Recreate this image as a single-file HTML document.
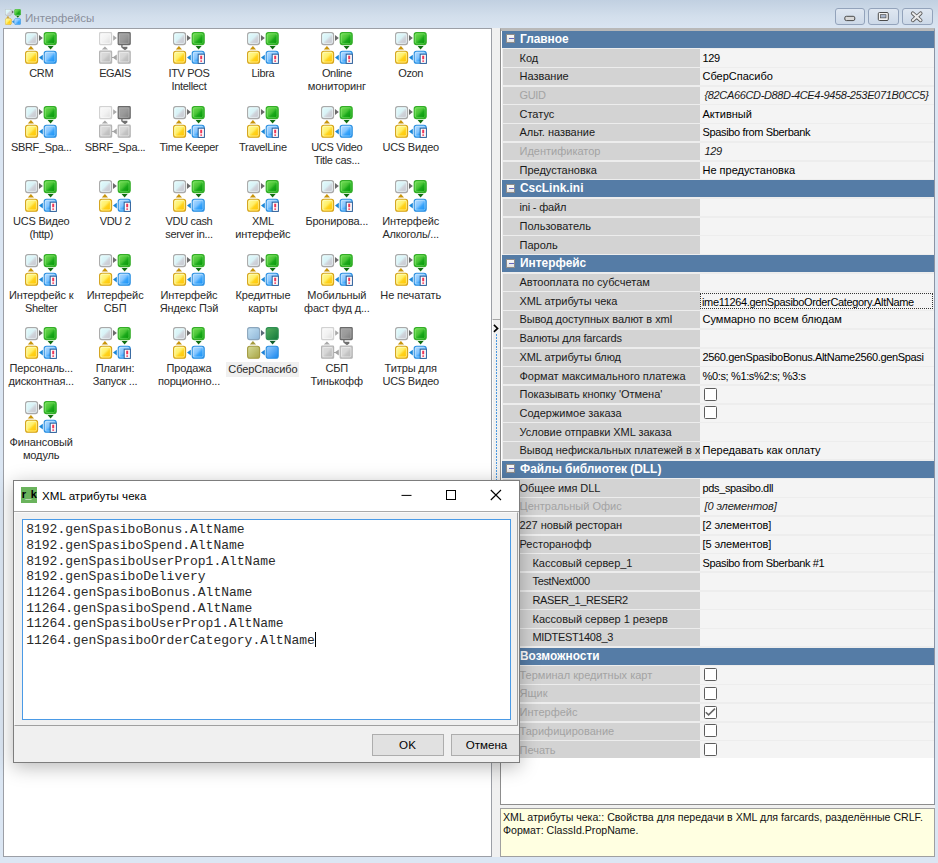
<!DOCTYPE html>
<html><head><meta charset="utf-8"><title>Интерфейсы</title>
<style>
html,body{margin:0;padding:0}
body{width:938px;height:863px;overflow:hidden;position:relative;background:#dbe6f3;font-family:"Liberation Sans",sans-serif;}
.abs{position:absolute}
#title{position:absolute;left:0;top:0;width:938px;height:28px;background:linear-gradient(#c1d0e1,#d3dfec 60%,#d9e4f1)}
#title .tx{position:absolute;left:25px;top:11px;font-size:11.6px;color:#8a8f9c;line-height:13px;letter-spacing:0}
.wb{position:absolute;top:8px;height:17px;border:1px solid #93a3bb;border-radius:3px;background:linear-gradient(#dfe7f1,#cdd9e8);box-sizing:border-box}
#list{position:absolute;left:3px;top:28px;width:489px;height:829px;box-sizing:border-box;border:1px solid #9c9fa6;background:#fff;overflow:hidden}
.it{position:absolute;width:80px;text-align:center}
.it .ic{display:block;margin:0 auto}
.lb{font-size:11px;line-height:13px;color:#2a2a2a;margin-top:3px;white-space:nowrap}
.lb.sel{display:inline-block;background:#f0f0f0;padding:1px 2px 1px 2px;margin-top:2px}
#split{position:absolute;left:492px;top:28px;width:8px;height:829px;background:#f0f0f0}
#grid{position:absolute;left:500px;top:28px;width:435px;height:777px;box-sizing:border-box;background:#fff;border-left:1px solid #8d8d8d;border-top:2px solid #b9b9b9;border-right:1px solid #8c94a4;border-bottom:1px solid #8d8d8d;overflow:hidden}
.gh{position:absolute;left:1px;width:432px;height:17.3px;background:#557ca6}
.gh span{position:absolute;left:18px;top:2.3px;font-weight:bold;font-size:11.9px;color:#fff;line-height:13px}
.mb{position:absolute;left:4px;top:3.5px;width:9px;height:9px;box-sizing:border-box;border:1px solid #8f8c8a;background:linear-gradient(#fafafa,#e4e4e4)}
.mb:after{content:"";position:absolute;left:1.5px;top:3px;width:5px;height:1px;background:#6266c0}
.gr{position:absolute;left:1.5px;width:431.5px;height:17.3px}
.nm{position:absolute;left:0;top:0;width:197.5px;height:17.3px;background:#d3d3d3;font-size:11px;line-height:13px;padding-left:17px;box-sizing:border-box;padding-top:2.4px;white-space:nowrap;overflow:hidden;color:#1a1a1a}
.nm.dis{color:#a3a3a3}
.nm.ind{padding-left:30px}
.vl{position:absolute;left:197.5px;top:0;width:234px;height:17.3px;background:#f4f4f4;overflow:hidden}
.vt,.vi{position:absolute;left:2.5px;top:2.4px;font-size:11px;line-height:13px;white-space:nowrap;color:#000}
.vi{font-style:italic;color:#1a1a1a;left:4.5px}
.cb{position:absolute;left:3.5px;top:1.9px;width:13px;height:13px;box-sizing:border-box;border:1px solid #5c5c5c;border-radius:1.5px;background:#fff}
.focus{position:absolute;left:0;top:0.5px;width:233px;height:16.5px;box-sizing:border-box;border:1px dotted #333}
.focus span{position:absolute;left:1px;top:2.3px;font-size:11px;line-height:13px;white-space:nowrap;letter-spacing:-0.35px}
#desc{position:absolute;left:500px;top:808px;width:435px;height:49px;box-sizing:border-box;border:1px solid #a0a0a0;background:#ffffe1;font-size:10.6px;line-height:12.5px;padding:2px 0 0 2px;color:#111}
#dlg{position:absolute;left:13px;top:480px;width:507px;height:283px;box-sizing:border-box;border:1px solid #7d7d7d;background:#f0f0f0;box-shadow:0 4px 18px rgba(0,0,0,0.28);overflow:hidden}
#dlg .tb{position:absolute;left:0;top:0;width:505px;height:31px;background:#fff}
#dlg .ttx{position:absolute;left:28px;top:7.6px;font-size:11.6px;line-height:13px;color:#000}
#dlg .rk{position:absolute;left:7px;top:5.5px;width:16px;height:16px;background:#6ab35c;font:bold 11px "Liberation Sans",sans-serif;color:#000;line-height:15px;text-align:center;letter-spacing:-0.6px;overflow:hidden}
#ta{position:absolute;left:8px;top:37.5px;width:489px;height:201.5px;box-sizing:border-box;border:1px solid #4a9ae6;background:#fff;font-family:"Liberation Mono",monospace;font-size:13px;line-height:15.7px;padding:2.7px 0 0 3.2px;color:#2a2a2a;white-space:nowrap}
.caret{display:inline-block;width:1px;height:15px;background:#000;vertical-align:-3px}
.btn{position:absolute;top:253px;height:22px;box-sizing:border-box;border:1px solid #adadad;background:#e1e1e1;font-size:11.6px;line-height:20px;text-align:center;color:#000}

</style></head><body>
<svg width="0" height="0" style="position:absolute">
<defs>
<linearGradient id="gW" x1="0" y1="0" x2="1" y2="1"><stop offset="0" stop-color="#e0feff"/><stop offset="0.45" stop-color="#d9f2f6"/><stop offset="0.6" stop-color="#cfd3da"/><stop offset="1" stop-color="#c4c4cc"/></linearGradient>
<linearGradient id="gG" x1="0" y1="0" x2="1" y2="1"><stop offset="0" stop-color="#7ce05a"/><stop offset="0.45" stop-color="#48c436"/><stop offset="0.6" stop-color="#1aa81a"/><stop offset="1" stop-color="#009200"/></linearGradient>
<linearGradient id="gY" x1="0" y1="0" x2="1" y2="1"><stop offset="0" stop-color="#fffda0"/><stop offset="0.45" stop-color="#ffef6a"/><stop offset="0.6" stop-color="#ffd21a"/><stop offset="1" stop-color="#ffc000"/></linearGradient>
<linearGradient id="gB" x1="0" y1="0" x2="1" y2="1"><stop offset="0" stop-color="#bfe0ff"/><stop offset="0.45" stop-color="#80c4ff"/><stop offset="0.6" stop-color="#3aa4fa"/><stop offset="1" stop-color="#0a8af5"/></linearGradient>
<linearGradient id="gX1" x1="0" y1="0" x2="1" y2="1"><stop offset="0" stop-color="#fbfbfb"/><stop offset="0.5" stop-color="#f2f2f2"/><stop offset="1" stop-color="#d8d8d8"/></linearGradient>
<linearGradient id="gX2" x1="0" y1="0" x2="1" y2="1"><stop offset="0" stop-color="#a6a6a6"/><stop offset="0.5" stop-color="#9a9a9a"/><stop offset="1" stop-color="#7a7a7a"/></linearGradient>
<linearGradient id="gX3" x1="0" y1="0" x2="1" y2="1"><stop offset="0" stop-color="#dedede"/><stop offset="0.45" stop-color="#d6d6d6"/><stop offset="0.6" stop-color="#c4c4c4"/><stop offset="1" stop-color="#b6b6b6"/></linearGradient>
<linearGradient id="gS1" x1="0" y1="0" x2="1" y2="1"><stop offset="0" stop-color="#c4e2f4"/><stop offset="1" stop-color="#8fb6d8"/></linearGradient>
<linearGradient id="gS2" x1="0" y1="0" x2="1" y2="1"><stop offset="0" stop-color="#58b060"/><stop offset="1" stop-color="#10783a"/></linearGradient>
<linearGradient id="gS3" x1="0" y1="0" x2="1" y2="1"><stop offset="0" stop-color="#d6dc9a"/><stop offset="1" stop-color="#a8a444"/></linearGradient>
<linearGradient id="gS4" x1="0" y1="0" x2="1" y2="1"><stop offset="0" stop-color="#9ccdfb"/><stop offset="1" stop-color="#1586f0"/></linearGradient>
<symbol id="base-n" viewBox="0 0 32 32">
 <rect x="0.6" y="0.6" width="12" height="12" rx="2.3" fill="url(#gW)" stroke="#a9a9a9" stroke-width="1.1"/>
 <path d="M14 3 L17.8 6 L14 9 Z" fill="#6a6a6a"/>
 <rect x="19.2" y="0.6" width="12" height="12" rx="2.3" fill="url(#gG)" stroke="#34ad27" stroke-width="1.1"/>
 <path d="M22.6 13.9 L28.6 13.9 L25.6 17.6 Z" fill="#0f6d10"/>
 <path d="M2.8 17.6 L9 17.6 L5.9 14 Z" fill="#c8940a"/>
 <rect x="0.6" y="19.2" width="12" height="12" rx="2.3" fill="url(#gY)" stroke="#d4a21a" stroke-width="1.1"/>
 <path d="M17.8 22.7 L17.8 28.5 L14 25.6 Z" fill="#1a86d8"/>
 <rect x="19.2" y="19.2" width="12" height="12" rx="2.3" fill="url(#gB)" stroke="#2a8ee0" stroke-width="1.1"/>
 <rect x="1.8" y="1.8" width="9.6" height="9.6" rx="1.3" fill="none" stroke="#f4ffff" stroke-opacity="0.7" stroke-width="0.8"/>
 <rect x="20.4" y="1.8" width="9.6" height="9.6" rx="1.3" fill="none" stroke="#8ef07a" stroke-opacity="0.6" stroke-width="0.8"/>
 <rect x="1.8" y="20.4" width="9.6" height="9.6" rx="1.3" fill="none" stroke="#ffffd0" stroke-opacity="0.7" stroke-width="0.8"/>
 <rect x="20.4" y="20.4" width="9.6" height="9.6" rx="1.3" fill="none" stroke="#d8f0ff" stroke-opacity="0.6" stroke-width="0.8"/>
</symbol>
<symbol id="ic-n" viewBox="0 0 32 32"><use href="#base-n"/></symbol>
<symbol id="ic-b" viewBox="0 0 32 32"><use href="#base-n"/>
 <rect x="25.2" y="22.2" width="6.2" height="9.2" fill="#fff" stroke="#30609a" stroke-width="1"/>
 <rect x="27.2" y="23.7" width="2" height="3.6" fill="#ee3656"/>
 <rect x="27.3" y="28.4" width="1.8" height="1.4" fill="#ee3656"/>
</symbol>
<symbol id="ic-g" viewBox="0 0 32 32">
 <rect x="0.6" y="0.6" width="12" height="12" rx="0.8" fill="url(#gX1)" stroke="#d2d2d2" stroke-width="1.2"/>
 <rect x="1.9" y="1.9" width="9.4" height="9.4" rx="1" fill="none" stroke="#fafafa" stroke-width="0.8"/>
 <path d="M14.2 3.2 L17.8 6 L14.2 8.8 Z" fill="#a8a8a8"/>
 <rect x="19.2" y="0.6" width="12" height="12" rx="0.8" fill="url(#gX2)" stroke="#6a6a6a" stroke-width="1.2"/>
 <rect x="20.5" y="1.9" width="9.4" height="9.4" rx="1" fill="none" stroke="#b4b4b4" stroke-opacity="0.7" stroke-width="0.8"/>
 <path d="M22.2 13 L22.2 15.2 L23.6 16.5 L26 18.3 L28.4 16.4 L28.4 14.8 L23.6 14.8 L23.6 13 Z" fill="#707070"/>
 <path d="M2.8 17.6 L9 17.6 L5.9 14.4 Z" fill="#a8a8a8"/>
 <rect x="0.6" y="19.2" width="12" height="12" rx="0.8" fill="url(#gX3)" stroke="#b4b4b4" stroke-width="1.2"/>
 <rect x="1.9" y="20.5" width="9.4" height="9.4" rx="1" fill="none" stroke="#f0f0f0" stroke-opacity="0.8" stroke-width="0.8"/>
 <path d="M17.8 22.6 L17.8 28.6 L14.2 26 L13 26 L13 25 L14.2 25 Z" fill="#a4a4a4"/>
 <rect x="19.2" y="19.2" width="12" height="12" rx="0.8" fill="url(#gX3)" stroke="#b4b4b4" stroke-width="1.2"/>
 <rect x="20.5" y="20.5" width="9.4" height="9.4" rx="1" fill="none" stroke="#f0f0f0" stroke-opacity="0.8" stroke-width="0.8"/>
</symbol>
<symbol id="ic-s" viewBox="0 0 32 32">
 <rect x="0.6" y="0.6" width="12" height="12" rx="2.3" fill="url(#gS1)" stroke="#8ba6bd" stroke-width="1.1"/>
 <path d="M14 3 L17.8 6 L14 9 Z" fill="#5a6a78"/>
 <rect x="19.2" y="0.6" width="12" height="12" rx="2.3" fill="url(#gS2)" stroke="#2f8f52" stroke-width="1.1"/>
 <path d="M22.6 13.9 L28.6 13.9 L25.6 17.6 Z" fill="#0e5e2c"/>
 <path d="M2.8 17.6 L9 17.6 L5.9 14 Z" fill="#a49a3c"/>
 <rect x="0.6" y="19.2" width="12" height="12" rx="2.3" fill="url(#gS3)" stroke="#a39a40" stroke-width="1.1"/>
 <path d="M17.8 22.7 L17.8 28.5 L14 25.6 Z" fill="#1a80d8"/>
 <rect x="19.2" y="19.2" width="12" height="12" rx="2.3" fill="url(#gS4)" stroke="#2a8ee0" stroke-width="1.1"/>
</symbol>
</defs>
</svg>

<div id="title">
 <svg style="position:absolute;left:5px;top:9px" width="16" height="16"><use href="#ic-n"/></svg>
 <div class="tx">Интерфейсы</div>
 <div class="wb" style="left:835px;width:30px"></div>
 <div class="wb" style="left:868px;width:31px"></div>
 <div class="wb" style="left:902px;width:31px"></div>
 <svg style="position:absolute;left:835px;top:8px" width="98" height="17">
  <rect x="9.8" y="8.3" width="10" height="4.3" rx="1.6" fill="#d8d8d8" stroke="#4a4a4a" stroke-width="1"/>
  <rect x="43.3" y="4.5" width="10" height="8" rx="1.2" fill="#f2f2f2" stroke="#4a4a4a" stroke-width="1"/>
  <rect x="45.6" y="6.7" width="5.4" height="3.2" fill="#a9b6cc" stroke="#3a3a3a" stroke-width="0.6"/>
  <path d="M77.8 5.3 L85.6 12.3 M85.6 5.3 L77.8 12.3" stroke="#5a5a5a" stroke-width="3.8" stroke-linecap="round"/>
  <path d="M77.8 5.3 L85.6 12.3 M85.6 5.3 L77.8 12.3" stroke="#ececec" stroke-width="2.1" stroke-linecap="round"/>
 </svg>
</div>
<div id="list">
<div class="it" style="left:-2.80px;top:3.20px"><svg class="ic" width="32" height="32"><use href="#ic-n"/></svg><div class="lb"><span style="letter-spacing:-0.340px">CRM</span></div></div>
<div class="it" style="left:71.10px;top:3.20px"><svg class="ic" width="32" height="32"><use href="#ic-g"/></svg><div class="lb"><span style="letter-spacing:-0.340px">EGAIS</span></div></div>
<div class="it" style="left:145.00px;top:3.20px"><svg class="ic" width="32" height="32"><use href="#ic-b"/></svg><div class="lb"><span style="letter-spacing:-0.340px">ITV POS</span><br><span style="letter-spacing:-0.340px">Intellect</span></div></div>
<div class="it" style="left:218.90px;top:3.20px"><svg class="ic" width="32" height="32"><use href="#ic-b"/></svg><div class="lb"><span style="letter-spacing:-0.340px">Libra</span></div></div>
<div class="it" style="left:292.80px;top:3.20px"><svg class="ic" width="32" height="32"><use href="#ic-b"/></svg><div class="lb"><span style="letter-spacing:-0.340px">Online</span><br><span style="letter-spacing:-0.120px">мониторинг</span></div></div>
<div class="it" style="left:366.70px;top:3.20px"><svg class="ic" width="32" height="32"><use href="#ic-b"/></svg><div class="lb"><span style="letter-spacing:-0.340px">Ozon</span></div></div>
<div class="it" style="left:-2.80px;top:77.00px"><svg class="ic" width="32" height="32"><use href="#ic-n"/></svg><div class="lb"><span style="letter-spacing:-0.340px">SBRF_Spa...</span></div></div>
<div class="it" style="left:71.10px;top:77.00px"><svg class="ic" width="32" height="32"><use href="#ic-g"/></svg><div class="lb"><span style="letter-spacing:-0.340px">SBRF_Spa...</span></div></div>
<div class="it" style="left:145.00px;top:77.00px"><svg class="ic" width="32" height="32"><use href="#ic-b"/></svg><div class="lb"><span style="letter-spacing:-0.340px">Time Keeper</span></div></div>
<div class="it" style="left:218.90px;top:77.00px"><svg class="ic" width="32" height="32"><use href="#ic-b"/></svg><div class="lb"><span style="letter-spacing:-0.340px">TravelLine</span></div></div>
<div class="it" style="left:292.80px;top:77.00px"><svg class="ic" width="32" height="32"><use href="#ic-n"/></svg><div class="lb"><span style="letter-spacing:-0.340px">UCS Video</span><br><span style="letter-spacing:-0.340px">Title cas...</span></div></div>
<div class="it" style="left:366.70px;top:77.00px"><svg class="ic" width="32" height="32"><use href="#ic-b"/></svg><div class="lb"><span style="letter-spacing:-0.203px">UCS Видео</span></div></div>
<div class="it" style="left:-2.80px;top:150.80px"><svg class="ic" width="32" height="32"><use href="#ic-b"/></svg><div class="lb"><span style="letter-spacing:-0.203px">UCS Видео</span><br><span style="letter-spacing:-0.340px">(http)</span></div></div>
<div class="it" style="left:71.10px;top:150.80px"><svg class="ic" width="32" height="32"><use href="#ic-b"/></svg><div class="lb"><span style="letter-spacing:-0.340px">VDU 2</span></div></div>
<div class="it" style="left:145.00px;top:150.80px"><svg class="ic" width="32" height="32"><use href="#ic-n"/></svg><div class="lb"><span style="letter-spacing:-0.340px">VDU cash</span><br><span style="letter-spacing:-0.340px">server in...</span></div></div>
<div class="it" style="left:218.90px;top:150.80px"><svg class="ic" width="32" height="32"><use href="#ic-b"/></svg><div class="lb"><span style="letter-spacing:-0.340px">XML</span><br><span style="letter-spacing:-0.120px">интерфейс</span></div></div>
<div class="it" style="left:292.80px;top:150.80px"><svg class="ic" width="32" height="32"><use href="#ic-b"/></svg><div class="lb"><span style="letter-spacing:-0.175px">Бронирова...</span></div></div>
<div class="it" style="left:366.70px;top:150.80px"><svg class="ic" width="32" height="32"><use href="#ic-n"/></svg><div class="lb"><span style="letter-spacing:-0.120px">Интерфейс</span><br><span style="letter-spacing:-0.193px">Алкоголь/...</span></div></div>
<div class="it" style="left:-2.80px;top:224.60px"><svg class="ic" width="32" height="32"><use href="#ic-b"/></svg><div class="lb"><span style="letter-spacing:-0.120px">Интерфейс к</span><br><span style="letter-spacing:-0.340px">Shelter</span></div></div>
<div class="it" style="left:71.10px;top:224.60px"><svg class="ic" width="32" height="32"><use href="#ic-n"/></svg><div class="lb"><span style="letter-spacing:-0.120px">Интерфейс</span><br><span style="letter-spacing:-0.120px">СБП</span></div></div>
<div class="it" style="left:145.00px;top:224.60px"><svg class="ic" width="32" height="32"><use href="#ic-n"/></svg><div class="lb"><span style="letter-spacing:-0.120px">Интерфейс</span><br><span style="letter-spacing:-0.120px">Яндекс Пэй</span></div></div>
<div class="it" style="left:218.90px;top:224.60px"><svg class="ic" width="32" height="32"><use href="#ic-b"/></svg><div class="lb"><span style="letter-spacing:-0.120px">Кредитные</span><br><span style="letter-spacing:-0.120px">карты</span></div></div>
<div class="it" style="left:292.80px;top:224.60px"><svg class="ic" width="32" height="32"><use href="#ic-b"/></svg><div class="lb"><span style="letter-spacing:-0.120px">Мобильный</span><br><span style="letter-spacing:-0.180px">фаст фуд д...</span></div></div>
<div class="it" style="left:366.70px;top:224.60px"><svg class="ic" width="32" height="32"><use href="#ic-b"/></svg><div class="lb"><span style="letter-spacing:-0.120px">Не печатать</span></div></div>
<div class="it" style="left:-2.80px;top:298.40px"><svg class="ic" width="32" height="32"><use href="#ic-b"/></svg><div class="lb"><span style="letter-spacing:-0.175px">Персональ...</span><br><span style="letter-spacing:-0.171px">дисконтная...</span></div></div>
<div class="it" style="left:71.10px;top:298.40px"><svg class="ic" width="32" height="32"><use href="#ic-b"/></svg><div class="lb"><span style="letter-spacing:-0.151px">Плагин:</span><br><span style="letter-spacing:-0.193px">Запуск ...</span></div></div>
<div class="it" style="left:145.00px;top:298.40px"><svg class="ic" width="32" height="32"><use href="#ic-n"/></svg><div class="lb"><span style="letter-spacing:-0.120px">Продажа</span><br><span style="letter-spacing:-0.175px">порционно...</span></div></div>
<div class="it" style="left:218.90px;top:298.40px"><svg class="ic" width="32" height="32"><use href="#ic-s"/></svg><div class="lb sel"><span style="letter-spacing:-0.120px">СберСпасибо</span></div></div>
<div class="it" style="left:292.80px;top:298.40px"><svg class="ic" width="32" height="32"><use href="#ic-g"/></svg><div class="lb"><span style="letter-spacing:-0.120px">СБП</span><br><span style="letter-spacing:-0.120px">Тинькофф</span></div></div>
<div class="it" style="left:366.70px;top:298.40px"><svg class="ic" width="32" height="32"><use href="#ic-b"/></svg><div class="lb"><span style="letter-spacing:-0.120px">Титры для</span><br><span style="letter-spacing:-0.203px">UCS Видео</span></div></div>
<div class="it" style="left:-2.80px;top:372.20px"><svg class="ic" width="32" height="32"><use href="#ic-b"/></svg><div class="lb"><span style="letter-spacing:-0.120px">Финансовый</span><br><span style="letter-spacing:-0.120px">модуль</span></div></div>
</div>
<div style="position:absolute;left:500px;top:28px;width:435px;height:829px;background:#f0f0f0"></div>
<div id="split">
 <div style="position:absolute;left:0;top:291px;width:8px;height:400px;border-top:1px solid #a6a6a6;box-sizing:border-box;border-left:1px solid #fff"></div>
 <svg style="position:absolute;left:0.8px;top:296px" width="6" height="9"><path d="M0.9 0.9 L4.6 4.4 L0.9 7.9" stroke="#000" stroke-width="1.6" fill="none"/></svg>
 <div style="position:absolute;left:4px;top:306px;width:1px;height:300px;background:repeating-linear-gradient(#4a98e0 0 1.9px,transparent 1.9px 2.9px)"></div>
</div>
<div id="grid">
<div style="position:absolute;left:0;top:0;width:434px;height:1px;background:#b9b9b9"></div><div style="position:absolute;left:1px;top:0.60px;width:432px;height:727.90px;background:#ededed"></div><div class="gh" style="top:0.60px"><div class="mb"></div><span>Главное</span></div>
<div class="gr" style="top:19.30px"><div class="nm" style="">Код</div><div class="vl"><span class="vt" style="letter-spacing:-0.350px">129</span></div></div>
<div class="gr" style="top:38.00px"><div class="nm" style="">Название</div><div class="vl"><span class="vt" style="">СберСпасибо</span></div></div>
<div class="gr" style="top:56.70px"><div class="nm dis" style="letter-spacing:-0.350px">GUID</div><div class="vl"><span class="vi" style="letter-spacing:-0.350px">{82CA66CD-D88D-4CE4-9458-253E071B0CC5}</span></div></div>
<div class="gr" style="top:75.40px"><div class="nm" style="">Статус</div><div class="vl"><span class="vt" style="">Активный</span></div></div>
<div class="gr" style="top:94.10px"><div class="nm" style="letter-spacing:-0.027px">Альт. название</div><div class="vl"><span class="vt" style="letter-spacing:-0.350px">Spasibo from Sberbank</span></div></div>
<div class="gr" style="top:112.80px"><div class="nm dis" style="">Идентификатор</div><div class="vl"><span class="vi" style="letter-spacing:-0.350px">129</span></div></div>
<div class="gr" style="top:131.50px"><div class="nm" style="">Предустановка</div><div class="vl"><span class="vt" style="">Не предустановка</span></div></div>
<div class="gh" style="top:150.20px"><div class="mb"></div><span>CscLink.ini</span></div>
<div class="gr" style="top:168.90px"><div class="nm" style="letter-spacing:-0.175px">ini - файл</div><div class="vl"></div></div>
<div class="gr" style="top:187.60px"><div class="nm" style="">Пользователь</div><div class="vl"></div></div>
<div class="gr" style="top:206.30px"><div class="nm" style="">Пароль</div><div class="vl"></div></div>
<div class="gh" style="top:225.00px"><div class="mb"></div><span>Интерфейс</span></div>
<div class="gr" style="top:243.70px"><div class="nm" style="">Автооплата по субсчетам</div><div class="vl"></div></div>
<div class="gr" style="top:262.40px"><div class="nm" style="letter-spacing:-0.070px">XML атрибуты чека</div><div class="vl"><div class="focus"><span>ime11264.genSpasiboOrderCategory.AltName</span></div></div></div>
<div class="gr" style="top:281.10px"><div class="nm" style="letter-spacing:-0.046px">Вывод доступных валют в xml</div><div class="vl"><span class="vt" style="">Суммарно по всем блюдам</span></div></div>
<div class="gr" style="top:299.80px"><div class="nm" style="letter-spacing:-0.165px">Валюты для farcards</div><div class="vl"></div></div>
<div class="gr" style="top:318.50px"><div class="nm" style="letter-spacing:-0.070px">XML атрибуты блюд</div><div class="vl"><span class="vt" style="letter-spacing:-0.350px">2560.genSpasiboBonus.AltName2560.genSpasi</span></div></div>
<div class="gr" style="top:337.20px"><div class="nm" style="">Формат максимального платежа</div><div class="vl"><span class="vt" style="letter-spacing:-0.350px">%0:s; %1:s%2:s; %3:s</span></div></div>
<div class="gr" style="top:355.90px"><div class="nm" style="letter-spacing:-0.029px">Показывать кнопку 'Отмена'</div><div class="vl"><div class="cb"></div></div></div>
<div class="gr" style="top:374.60px"><div class="nm" style="">Содержимое заказа</div><div class="vl"><div class="cb"></div></div></div>
<div class="gr" style="top:393.30px"><div class="nm" style="letter-spacing:-0.044px">Условие отправки XML заказа</div><div class="vl"></div></div>
<div class="gr" style="top:412.00px"><div class="nm" style="letter-spacing:-0.013px">Вывод нефискальных платежей в x</div><div class="vl"><span class="vt" style="">Передавать как оплату</span></div></div>
<div class="gh" style="top:430.70px"><div class="mb"></div><span>Файлы библиотек (DLL)</span></div>
<div class="gr" style="top:449.40px"><div class="nm" style="letter-spacing:-0.095px">Общее имя DLL</div><div class="vl"><span class="vt" style="letter-spacing:-0.350px">pds_spasibo.dll</span></div></div>
<div class="gr" style="top:468.10px"><div class="nm dis" style="">Центральный Офис</div><div class="vl"><span class="vi" style="letter-spacing:-0.087px">[0 элементов]</span></div></div>
<div class="gr" style="top:486.80px"><div class="nm" style="letter-spacing:-0.066px">227 новый ресторан</div><div class="vl"><span class="vt" style="letter-spacing:-0.087px">[2 элементов]</span></div></div>
<div class="gr" style="top:505.50px"><div class="nm" style="">Ресторанофф</div><div class="vl"><span class="vt" style="letter-spacing:-0.087px">[5 элементов]</span></div></div>
<div class="gr" style="top:524.20px"><div class="nm ind" style="letter-spacing:-0.044px">Кассовый сервер_1</div><div class="vl"><span class="vt" style="letter-spacing:-0.350px">Spasibo from Sberbank #1</span></div></div>
<div class="gr" style="top:542.90px"><div class="nm ind" style="letter-spacing:-0.350px">TestNext000</div><div class="vl"></div></div>
<div class="gr" style="top:561.60px"><div class="nm ind" style="letter-spacing:-0.350px">RASER_1_RESER2</div><div class="vl"></div></div>
<div class="gr" style="top:580.30px"><div class="nm ind" style="letter-spacing:-0.017px">Кассовый сервер 1 резерв</div><div class="vl"></div></div>
<div class="gr" style="top:599.00px"><div class="nm ind" style="letter-spacing:-0.350px">MIDTEST1408_3</div><div class="vl"></div></div>
<div class="gh" style="top:617.70px"><div class="mb"></div><span>Возможности</span></div>
<div class="gr" style="top:636.40px"><div class="nm dis" style="">Терминал кредитных карт</div><div class="vl"><div class="cb"></div></div></div>
<div class="gr" style="top:655.10px"><div class="nm dis" style="">Ящик</div><div class="vl"><div class="cb"></div></div></div>
<div class="gr" style="top:673.80px"><div class="nm dis" style="">Интерфейс</div><div class="vl"><div class="cb"><svg width="11" height="11" style="position:absolute;left:0;top:0"><path d="M0.8 5.2 L3.6 7.9 L10 1.6" stroke="#666" stroke-width="1.5" fill="none"/></svg></div></div></div>
<div class="gr" style="top:692.50px"><div class="nm dis" style="">Тарифицирование</div><div class="vl"><div class="cb"></div></div></div>
<div class="gr" style="top:711.20px"><div class="nm dis" style="">Печать</div><div class="vl"><div class="cb"></div></div></div>
</div>
<div id="desc">XML атрибуты чека:: Свойства для передачи в XML для farcards, разделённые CRLF.<br>Формат: ClassId.PropName.</div>
<div id="dlg">
 <div class="tb">
  <div class="rk">r<span style="color:#fff">_</span>k</div>
  <div class="ttx">XML атрибуты чека</div>
 </div>
 <svg style="position:absolute;left:383px;top:8.4px" width="120" height="12">
  <path d="M4.5 6.4 H14.5" stroke="#000" stroke-width="1"/>
  <rect x="49.5" y="1.5" width="9" height="9" stroke="#000" stroke-width="1" fill="none"/>
  <path d="M93.8 1 L104 11 M104 1 L93.8 11" stroke="#000" stroke-width="1.1"/>
 </svg>
 <div style="position:absolute;left:0;top:30px;width:505px;height:1px;background:#a9a9a9"></div>
 <div style="position:absolute;left:0;top:31px;width:504px;height:214px;box-sizing:border-box;border-top:1px solid #fafafa;border-left:1px solid #fafafa;border-right:1px solid #a0a0a0;border-bottom:1px solid #a0a0a0"></div>
 <div id="ta">8192.genSpasiboBonus.AltName<br>8192.genSpasiboSpend.AltName<br>8192.genSpasiboUserProp1.AltName<br>8192.genSpasiboDelivery<br>11264.genSpasiboBonus.AltName<br>11264.genSpasiboSpend.AltName<br>11264.genSpasiboUserProp1.AltName<br>11264.genSpasiboOrderCategory.AltName<span class="caret"></span></div>
 <div class="btn" style="left:357.5px;width:72px">OK</div>
 <div class="btn" style="left:436.5px;width:72px">Отмена</div>
</div>

</body></html>
